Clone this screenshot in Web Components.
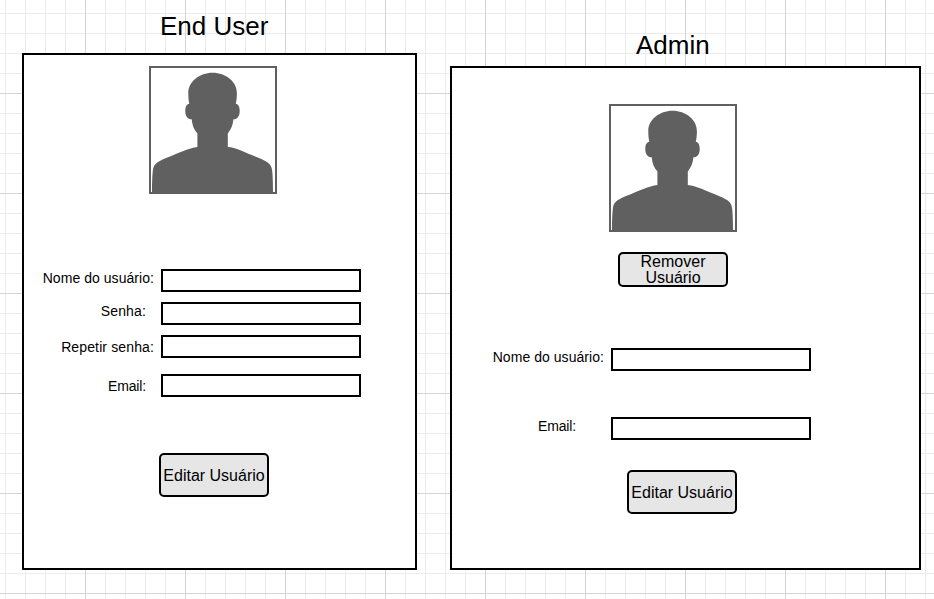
<!DOCTYPE html>
<html lang="pt">
<head>
<meta charset="utf-8">
<title>User screens</title>
<style>
html, body { margin: 0; height: 100%; overflow: hidden; }
body { font-family: "Liberation Sans", Arial, sans-serif; color: #000; }
</style>
</head>
<body>
<wire-canvas>
  <user-screen style="--w:395px;--h:517px;--top:11px;--title-gap:12px;--title-x:138px">
    <span slot="title">End User</span>
    <user-avatar style="margin:11px 0 0 125px"></user-avatar>
    <form-row style="margin-top:75px;--end:7px;letter-spacing:.05px">Nome do usuário:</form-row>
    <form-row style="margin-top:10px;--end:15px;letter-spacing:.15px">Senha:</form-row>
    <form-row style="margin-top:10px;--end:7px;--drop:4px;letter-spacing:.13px">Repetir senha:</form-row>
    <form-row style="margin-top:16px;--end:15px;--drop:4px;letter-spacing:-.15px">Email:</form-row>
    <wire-button style="margin:56px 0 0 135px;--nudge:2px">Editar Usuário</wire-button>
  </user-screen>
  <user-screen style="--w:471px;--h:504px;--top:30px;--title-gap:6px;--title-x:186px">
    <span slot="title">Admin</span>
    <user-avatar style="margin:36px 0 0 157px"></user-avatar>
    <wire-button style="margin:20px 0 0 166px;--bh:35px">Remover<br>Usuário</wire-button>
    <form-row style="margin-top:61px;--label:159px;--end:7px;letter-spacing:.05px">Nome do usuário:</form-row>
    <form-row style="margin-top:46px;--label:159px;--end:35px;letter-spacing:-.15px">Email:</form-row>
    <wire-button style="margin:30px 0 0 175px;--nudge:2px">Editar Usuário</wire-button>
  </user-screen>
</wire-canvas>
<script>
function define(name, markup) {
  const template = document.createElement('template');
  template.innerHTML = markup;
  customElements.define(name, class extends HTMLElement {
    constructor() {
      super();
      this.attachShadow({ mode: 'open' }).append(template.content.cloneNode(true));
    }
  });
}

// Sheet with 20px minor and 100px major grid lines.
define('wire-canvas', `<style>
:host {
  display: flex; align-items: flex-start; gap: 33px;
  box-sizing: border-box; height: 599px; padding-left: 22px;
  background-color: #fff;
  background-image:
    linear-gradient(90deg, #d4d4d4 1px, transparent 1px),
    linear-gradient(#d4d4d4 1px, transparent 1px),
    linear-gradient(90deg, #ebebeb 1px, transparent 1px),
    linear-gradient(#ebebeb 1px, transparent 1px);
  background-size: 100px 100px, 100px 100px, 20px 20px, 20px 20px;
  background-position: 85px 93px, 85px 93px, 5px 13px, 5px 13px;
}
</style><slot></slot>`);

define('user-screen', `<style>
:host { display: block; flex: none; width: var(--w); padding-top: var(--top); }
header { font-size: 26px; line-height: 30px; padding-left: var(--title-x); white-space: nowrap; }
section {
  display: flex; flex-direction: column; align-items: flex-start;
  box-sizing: border-box; width: var(--w); height: var(--h);
  margin-top: var(--title-gap); border: 2px solid #000; background: #fff;
}
</style><header><slot name="title"></slot></header><section><slot></slot></section>`);

define('user-avatar', `<style>
:host { display: block; box-sizing: border-box; width: 128px; height: 128px; border: 2px solid #606060; background: #fff; }
svg { display: block; width: 124px; height: 124px; }
</style><svg viewBox="2 2 124 124" aria-hidden="true"><path fill="#606060" d="M63.6 6.8C50.4 6.8 39.3 15.8 39.3 27C39.3 31 39.5 34 40.3 37.7C37.5 38.2 36.3 41 36.3 45C36.3 50 38.5 53.3 42.7 53.3C43.2 59 45 64 48.4 67.5V81C40 82 30 87 17 92C7 96 4.3 99 3.8 105C3.2 111 3 117 3 126H124C124 117 123.8 111 123.2 105C122.7 99 120 96 110 92C97 87 87 81.5 78.8 81V67.5C82 63.5 84 59 84.4 53.3C88.5 53.3 90.7 50 90.7 45C90.7 41 89.5 38.2 86.8 37.7C87.6 34 87.9 31 87.9 27C87.9 15.8 76.8 6.8 63.6 6.8Z"/></svg>`);

define('form-row', `<style>
:host { display: grid; grid-template-columns: var(--label, 137px) 200px; height: 23px; }
label { font-size: 14px; line-height: 16px; margin-top: var(--drop, 1px); padding-right: var(--end); text-align: right; white-space: nowrap; }
.field { box-sizing: border-box; height: 23px; border: 2px solid #000; background: #fff; }
</style><label><slot></slot></label><div class="field"></div>`);

define('wire-button', `<style>
:host { display: block; }
button {
  display: flex; align-items: center; justify-content: center;
  box-sizing: border-box; width: 110px; height: var(--bh, 44px); margin: 0; padding: var(--nudge, 0px) 0 0;
  border: 2px solid #000; border-radius: 5px; background: #e6e6e6; color: #000;
  font: 16px/16px "Liberation Sans", Arial, sans-serif; text-align: center; white-space: nowrap;
}
</style><button type="button"><span><slot></slot></span></button>`);
</script>
</body>
</html>
